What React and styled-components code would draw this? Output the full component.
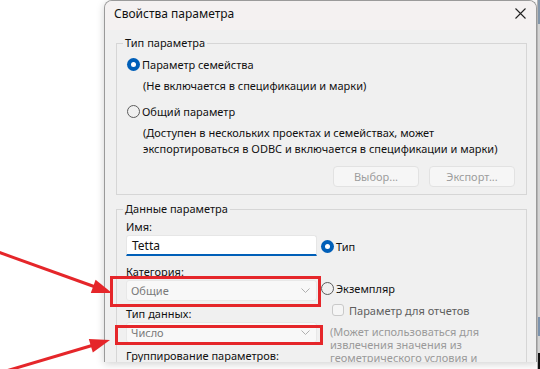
import React from 'react'
import styled, { createGlobalStyle } from 'styled-components'

const GlobalStyle = createGlobalStyle`
  html, body {
    margin: 0;
    padding: 0;
    background: #ffffff;
  }
  body {
    font-family: "Segoe UI", "Noto Sans", "Liberation Sans", sans-serif;
    font-size: 11px;
    color: #1a1a1a;
  }
`

const Page = styled.div`
  position: relative;
  display: flex;
  width: 540px;
  height: 369px;
  overflow: hidden;
  background: #ffffff;
`

const LeftSpace = styled.div`
  width: 104px;
  flex: none;
`

const Dialog = styled.div`
  width: 431px;
  height: 361px;
  flex: none;
  display: flex;
  flex-direction: column;
  background: #f0f0f0;
  border: 1px solid #9a9a9a;
  border-bottom: none;
  border-top-left-radius: 8px;
  border-top-right-radius: 8px;
  overflow: hidden;
  box-shadow: 0 2px 8px rgba(0, 0, 0, 0.18);
`

const RightStrip = styled.div`
  flex: 1;
  display: flex;
  flex-direction: column;
  background: #d4d4d4;
  border-left: 1px solid #b5b5b5;
`

const StripPart = styled.div`
  height: ${(p) => p.h}px;
  background: ${(p) => p.c};
`

const TitleBar = styled.div`
  height: 29px;
  flex: none;
  box-sizing: border-box;
  display: flex;
  align-items: center;
  justify-content: space-between;
  padding: 0 8px 4px 9px;
  background: #f4f1f1;
`

const Title = styled.span`
  font-size: 12px;
  color: #111;
`

const Close = styled.svg`
  width: 11px;
  height: 11px;
  margin-right: 2px;
`

const Body = styled.div`
  flex: 1;
  padding: 5px 9px 0 11px;
`

const Group = styled.fieldset`
  margin: ${(p) => p.mt || 0}px 0 0 0;
  padding: 0 ${(p) => p.pr || 0}px ${(p) => p.pb || 0}px 0;
  border: 1px solid #d6d6d6;
  min-width: 0;
`

const Legend = styled.legend`
  margin-left: 6px;
  padding: 0 2px;
  line-height: 16px;
  color: #111;
`

const OptionRow = styled.label`
  display: flex;
  align-items: center;
  gap: ${(p) => p.gap ?? 2}px;
  height: 16px;
  margin-top: ${(p) => p.mt || 0}px;
  padding-left: ${(p) => p.pl || 0}px;
  color: ${(p) => (p.dim ? '#5e5e5e' : '#111')};
`

const Radio = styled.span`
  width: 13px;
  height: 13px;
  box-sizing: border-box;
  border-radius: 50%;
  flex: none;
  ${(p) =>
    p.checked
      ? `background: #005fb8; display: flex; align-items: center; justify-content: center;
         &::after { content: ''; width: 5px; height: 5px; border-radius: 50%; background: #fff; }`
      : `border: 1px solid #5c5c5c; background: transparent;`}
`

const Check = styled.span`
  width: 12px;
  height: 12px;
  box-sizing: border-box;
  border: 1px solid #c9c9c9;
  border-radius: 3px;
  background: #f5f5f5;
  flex: none;
`

const Note = styled.div`
  margin-top: ${(p) => p.mt || 0}px;
  padding-left: ${(p) => p.pl || 0}px;
  line-height: ${(p) => p.lh || 16}px;
  white-space: nowrap;
  color: ${(p) => (p.dim ? '#9a9a9a' : '#111')};
`

const ButtonRow = styled.div`
  display: flex;
  justify-content: flex-end;
  gap: 10px;
  margin-top: 9px;
`

const Button = styled.div`
  width: 86px;
  height: 21px;
  box-sizing: border-box;
  display: flex;
  align-items: center;
  justify-content: center;
  border: 1px solid #e2e2e2;
  border-radius: 4px;
  background: #f6f6f6;
  color: #9d9d9d;
`

const DataGrid = styled.div`
  display: flex;
  gap: 4px;
  padding-left: 9px;
`

const LeftCol = styled.div`
  width: 191px;
  flex: none;
  display: flex;
  flex-direction: column;
`

const RightCol = styled.div`
  flex: 1;
  display: flex;
  flex-direction: column;
  padding-top: 21px;
`

const FieldLabel = styled.div`
  line-height: 16px;
  margin-top: ${(p) => p.mt || 0}px;
  white-space: nowrap;
  color: #111;
`

const TextInput = styled.div`
  height: 21px;
  box-sizing: border-box;
  display: flex;
  align-items: center;
  padding-left: 5px;
  background: #ffffff;
  border: 1px solid #e6e6e6;
  border-bottom: 2px solid #005fb8;
  border-radius: 3px 3px 0 0;
  color: #111;
  font-size: 12px;
`

const Select = styled.div`
  height: 21px;
  box-sizing: border-box;
  display: flex;
  align-items: center;
  justify-content: space-between;
  padding: 0 6px 0 4px;
  background: #f8f8f8;
  border: 1px solid #e8e8e8;
  border-radius: 3px;
  color: #7a7a7a;
`

const Chevron = styled.svg`
  width: 9px;
  height: 5px;
`

const Marker = styled.div`
  position: absolute;
  left: ${(p) => p.x}px;
  top: ${(p) => p.y}px;
  width: ${(p) => p.w}px;
  height: ${(p) => p.h}px;
  box-sizing: border-box;
  border: 3px solid #e5262a;
  pointer-events: none;
`

const Arrows = styled.svg`
  position: absolute;
  left: 0;
  top: 0;
  width: 540px;
  height: 369px;
  pointer-events: none;
`

const Down = () => (
  <Chevron viewBox="0 0 9 5">
    <path d="M0.5 0.5 L4.5 4.5 L8.5 0.5" fill="none" stroke="#b0b0b0" strokeWidth="1" />
  </Chevron>
)

export default function App() {
  return (
    <>
      <GlobalStyle />
      <Page>
        <LeftSpace />
        <Dialog>
          <TitleBar>
            <Title>Свойства параметра</Title>
            <Close viewBox="0 0 11 11">
              <path d="M0.5 0.5 L10.5 10.5 M10.5 0.5 L0.5 10.5" stroke="#222" strokeWidth="1.1" />
            </Close>
          </TitleBar>
          <Body>
            <Group pr={11} pb={7}>
              <Legend>Тип параметра</Legend>
              <OptionRow mt={5} pl={10}>
                <Radio checked />
                Параметр семейства
              </OptionRow>
              <Note mt={6} pl={26}>(Не включается в спецификации и марки)</Note>
              <OptionRow mt={9} pl={10}>
                <Radio />
                Общий параметр
              </OptionRow>
              <Note mt={6} pl={26}>
                (Доступен в нескольких проектах и семействах, может
                <br />
                экспортироваться в ODBC и включается в спецификации и марки)
              </Note>
              <ButtonRow>
                <Button>Выбор...</Button>
                <Button>Экспорт...</Button>
              </ButtonRow>
            </Group>
            <Group mt={6}>
              <Legend>Данные параметра</Legend>
              <DataGrid>
                <LeftCol>
                  <FieldLabel mt={2}>Имя:</FieldLabel>
                  <TextInput>Tetta</TextInput>
                  <FieldLabel mt={8}>Категория:</FieldLabel>
                  <Select>
                    Общие
                    <Down />
                  </Select>
                  <FieldLabel mt={5}>Тип данных:</FieldLabel>
                  <Select>
                    Число
                    <Down />
                  </Select>
                  <FieldLabel mt={5}>Группирование параметров:</FieldLabel>
                </LeftCol>
                <RightCol>
                  <OptionRow gap={2}>
                    <Radio checked />
                    Тип
                  </OptionRow>
                  <OptionRow mt={26} gap={2}>
                    <Radio />
                    Экземпляр
                  </OptionRow>
                  <OptionRow mt={6} pl={11} gap={5} dim>
                    <Check />
                    Параметр для отчетов
                  </OptionRow>
                  <Note mt={7} pl={9} lh={13} dim>
                    (Может использоваться для
                    <br />
                    извлечения значения из
                    <br />
                    геометрического условия и
                  </Note>
                </RightCol>
              </DataGrid>
            </Group>
          </Body>
        </Dialog>
        <RightStrip>
          <StripPart h={24} c="#8497ab" />
          <StripPart h={293} c="#d4d4d4" />
          <StripPart h={19} c="#7c93ad" />
          <StripPart h={17} c="#d4d4d4" />
          <StripPart h={16} c="#111" />
        </RightStrip>
        <Marker x={110} y={276} w={211} h={31} />
        <Marker x={115} y={325} w={208} h={20} />
        <Arrows viewBox="0 0 540 369">
          <line x1="-2" y1="252" x2="94" y2="286.5" stroke="#e5262a" strokeWidth="3" />
          <polygon points="112,293 90.8,292.9 95.6,279.7" fill="#e5262a" />
          <line x1="6" y1="371" x2="92" y2="345.5" stroke="#e5262a" strokeWidth="3" />
          <polygon points="110,340 92.8,352.4 88.8,339" fill="#e5262a" />
        </Arrows>
      </Page>
    </>
  )
}
